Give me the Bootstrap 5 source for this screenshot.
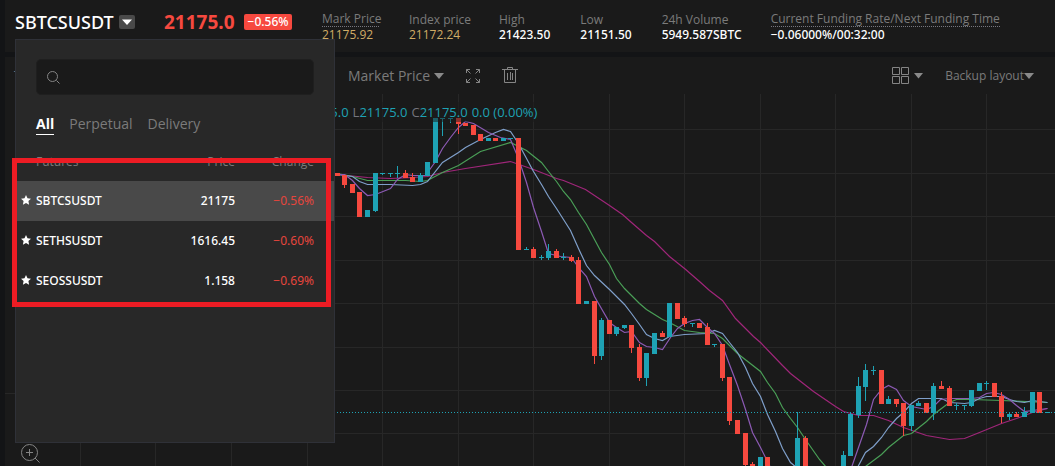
<!DOCTYPE html>
<html lang="en" data-bs-theme="dark">
<head>
<meta charset="utf-8">
<meta name="viewport" content="width=device-width, initial-scale=1">
<title>SBTCSUSDT Futures</title>
<link href="https://cdn.jsdelivr.net/npm/bootstrap@5.3.0/dist/css/bootstrap.min.css" rel="stylesheet">
<style>
  :root { --panel: #1a1a1a; --gap: #131416; --muted: #7b7b7b; --up: #1ea2b4; --down: #f6493f; --gold: #d0ac66; }
  body { background: var(--gap); color: #fff; font: 12px/16px "Open Sans", "Noto Sans", sans-serif; overflow: hidden; }
  button { font: inherit; }
  .plain { background: none; border: 0; padding: 0; color: var(--muted); }
  .page { margin-left: 5px; }
  .bar, .tools, .plot { background: var(--panel); }
  .bar { height: 52px; padding-left: 10px; margin-bottom: 5px; }
  .medium { font-family: "Noto Sans", sans-serif; font-weight: 500; }
  .pair { min-width: 149px; padding-top: 10px; gap: 5px; }
  .symbol { font-size: 18px; line-height: 24px; }
  .toggle { width: 16px; height: 14px; margin-top: 5px; background: #494949; border-radius: 2px; }
  .last { font: 700 19px/24px "Noto Sans", sans-serif; color: var(--down); width: 80px; padding-top: 10px; }
  .change { font: 500 12px/16px "Noto Sans", sans-serif; background: var(--down); border-radius: 2px; width: 48px; padding: 0; margin-top: 14px; }
  .stats { gap: 30px; padding: 11px 0 0 30px; }
  .stats > div { min-width: 51px; white-space: nowrap; }
  .stats .w-index { width: 60px; } .stats .w-mark { width: 57px; } .stats .w-vol { width: 79px; }
  .stats dt { font-weight: 400; color: var(--muted); line-height: 17px; }
  .stats dd { margin: 0; line-height: 13px; }
  .stats .hint { border-bottom: 1px dotted #77777f; line-height: 15px; margin-bottom: 1px; }
  .gold { color: var(--gold); }
  .tools { height: 37px; color: var(--muted); font-size: 14px; padding: 0 21px 0 9px; gap: 22px; }
  .small-text { font-size: 12px; }
  .intervals { width: 312px; }
  .plot svg { display: block; }
  .plot #chart { width: 100%; }
  .legend { top: 8px; left: 286px; font-size: 13px; line-height: 20px; color: var(--up); background: rgba(26,26,26,.5); gap: 4px; }
  .legend b { font-weight: 400; color: #74747c; }
  .zoom-in { left: 16px; bottom: 2px; }
  .picker { top: 39px; left: 10px; width: 320px; height: 404px; background: #282828; border: 1px solid #2f3138; z-index: 5; }
  .search { margin: 19px 20px 0; height: 36px; background: var(--panel); border: 1px solid #1f1f1f; border-radius: 5px; padding-left: 10px; }
  .search input { background: none; border: 0; outline: 0; color: #fff; }
  .tabs { margin: 19px 20px 0; gap: 15px; font-size: 14px; line-height: 20px; }
  .tabs a { color: var(--muted); text-decoration: none; border-bottom: 1px solid transparent; }
  .tabs a.active { color: #fff; font-weight: 700; border-color: #fff; }
  .pairs { width: 100%; margin-top: 16px; table-layout: fixed; }
  .pairs th { font-weight: 400; color: var(--muted); height: 30px; padding: 3px 0 0; vertical-align: top; }
  .pairs td { height: 40px; padding: 0; }
  .pairs tr.on { background: #494949; }
  .pairs th:nth-child(n+2), .pairs td:nth-child(n+2) { text-align: right; }
  .pairs th:last-child, .pairs td:last-child { padding-right: 20px; }
  .pairs td:last-child { color: #e6453d; font-weight: 400; }
  .pairs .name { width: 110px; } .pairs .chg { width: 99px; }
  .pairs th:first-child { padding-left: 20px; }
  .pairs td:first-child { padding-left: 5px; }
  .fav { margin: 0 5px 2px 0; }
  .marker { top: 158px; left: 7px; width: 319px; height: 149px; border: 5px solid #ed1c24; z-index: 6; pointer-events: none; }
</style>
</head>
<body>
<div class="page position-relative">
  <header class="bar d-flex align-items-start">
    <div class="d-flex align-items-start pair">
      <h1 class="symbol medium m-0">SBTCSUSDT</h1>
      <button class="plain toggle d-flex align-items-center justify-content-center" aria-label="Choose contract">
        <svg width="10" height="6"><path d="M0 0.500H10L5 6z" fill="#fff"/></svg>
      </button>
    </div>
    <div class="last">21175.0</div>
    <div class="change badge">−0.56%</div>
    <dl class="stats d-flex mb-0">
      <div class="w-mark"><dt class="hint">Mark Price</dt><dd class="gold">21175.92</dd></div>
      <div class="w-index"><dt>Index price</dt><dd class="gold">21172.24</dd></div>
      <div><dt>High</dt><dd class="medium">21423.50</dd></div>
      <div><dt>Low</dt><dd class="medium">21151.50</dd></div>
      <div class="w-vol"><dt>24h Volume</dt><dd class="medium">5949.587SBTC</dd></div>
      <div><dt class="hint">Current Funding Rate/Next Funding Time</dt><dd class="medium">−0.06000%/00:32:00</dd></div>
    </dl>
  </header>

  <nav class="tools d-flex align-items-center" aria-label="Chart tools">
    <button class="plain intervals text-start">Time</button>
    <button class="plain d-flex align-items-center gap-1">Market Price <svg width="10" height="6"><path d="M0 0H10L5 6z" fill="#8a8a8a"/></svg></button>
    <button class="plain d-flex" aria-label="Full screen">
      <svg width="14" height="14" fill="none" stroke="#858585"><path d="M.5 4V.5H4M.5.5L4.500 4.500M10 .5h3.500V4M13.500.5L9.500 4.500M.5 10v3.500H4M.5 13.500L4.500 9.500M13.500 10v3.500H10M13.500 13.500L9.500 9.500"/></svg>
    </button>
    <button class="plain d-flex" aria-label="Delete drawings">
      <svg width="16" height="17" fill="none" stroke="#858585"><path d="M0 2.500H16M5.500 2.500V.5H10.500V2.500M2.500 2.500V15.500H13.500V2.500M5.500 6V13M8.500 5V13M10.500 6V13"/></svg>
    </button>
    <button class="plain d-flex align-items-center gap-1 ms-auto" aria-label="Layout grid">
      <svg width="18" height="18" fill="none" stroke="#858585"><path d="M.5.5h7v7h-7zM9.500.5h7v7h-7zM.5 9.500h7v7h-7zM9.500 9.500h7v7h-7z"/></svg>
      <svg width="9" height="6"><path d="M0 0H9L4.500 5.500z" fill="#8a8a8a"/></svg>
    </button>
    <button class="plain small-text d-flex align-items-center">Backup layout <svg width="10" height="6"><path d="M0 0H10L5 6z" fill="#8a8a8a"/></svg></button>
  </nav>

  <main class="plot position-relative">
    <svg id="chart" viewBox="5 94 1050 372" role="img" aria-label="Candlestick chart with moving averages"></svg>
    <div class="legend position-absolute d-flex text-nowrap">
      <span><b>H</b>21175.0</span><span><b>L</b>21175.0</span><span><b>C</b>21175.0</span><span>0.0 (0.00%)</span>
    </div>
    <button class="plain zoom-in position-absolute" aria-label="Zoom in">
      <svg width="20" height="20" fill="none" stroke="#858585"><circle cx="8.500" cy="8.500" r="8"/><path d="M14 14l4.500 4.500M5 8.500h7M8.500 5v7"/></svg>
    </button>
  </main>

  <section class="picker position-absolute" aria-label="Contracts">
    <div class="search d-flex align-items-center">
      <svg width="13" height="13" fill="none" stroke="#858585"><circle cx="5.500" cy="5.500" r="5"/><path d="M9.500 9.500L12.500 12.500"/></svg>
      <input class="flex-fill" type="text" aria-label="Search contracts">
    </div>
    <nav class="tabs d-flex"><a class="active" href="#all">All</a><a href="#perpetual">Perpetual</a><a href="#delivery">Delivery</a></nav>
    <table class="pairs">
      <thead><tr><th class="name">Futures</th><th>Price</th><th class="chg">Change</th></tr></thead>
      <tbody id="rows" class="medium"></tbody>
    </table>
  </section>
  <div class="marker position-absolute"></div>
</div>
<script src="https://cdn.jsdelivr.net/npm/bootstrap@5.3.0/dist/js/bootstrap.bundle.min.js"></script>
<script>
const star = '<svg class="fav" width="10" height="10" viewBox="0 0 20 20"><path fill="#fff" d="M10 0l3 6.500 7 .8-5.200 4.900L16.200 19.500 10 15.800 3.800 19.500 5.200 12.200 0 7.300l7-.8z"/></svg>';
document.getElementById('rows').innerHTML = [['SBTCSUSDT','21175','−0.56%'],['SETHSUSDT','1616.45','−0.60%'],['SEOSSUSDT','1.158','−0.69%']]
  .map((r, i) => `<tr class="${i ? '' : 'on'}"><td><span class="d-flex align-items-center">${star}${r[0]}</span></td><td>${r[1]}</td><td>${r[2]}</td></tr>`).join('');

// direction (1 up, 0 down), centre x, body top, body bottom, wick top, wick bottom
const candles = [
[0,337,173,176],[0,344,175,185,175,188],[0,352,184,193],[0,359,192,217],[1,367,210,217],[1,375,173,211,173,212],
[1,382,173,174,173,175],[1,390,173,174,173,177],[1,397,173,174,166,178],[0,405,173,178,170,178],[0,412,177,182,173,182],[1,420,175,182,173,182],
[1,427,162,176],[1,435,118,163],[1,442,118,119,118,136],[1,450,118,119,118,123],[0,458,118,124,118,134],[0,465,123,126],[0,473,125,135],
[0,480,134,141],[1,488,138,141],[0,495,138,141],[1,503,138,141],[1,510,138,139],[0,518,138,250],[1,526,249,250,247,250],[0,533,249,258,247,258],
[1,541,257,258,255,260],[1,548,251,258,244,260],[0,556,251,258,249,258],[1,563,257,258,253,260],[0,571,257,261,255,262],[0,578,260,304,257,304],
[1,586,301,304],[0,594,301,356,301,364],[1,601,320,356,318,360],[0,609,320,334],[1,616,327,334,327,336],[1,624,325,328,325,329],[0,631,325,348,325,353],
[0,639,347,378,344,381],[1,646,353,378,353,386],[1,654,333,354],[0,662,333,337,331,337],[1,669,303,337],[0,677,303,319],[0,684,318,324,316,327],
[1,692,323,324,323,327],[0,699,323,328],[0,707,327,345,323,345],[1,714,344,345,344,347],[0,722,344,378,344,381],[0,729,377,421,377,425],[0,737,420,434],
[0,745,433,465,433,466],[0,752,464,466,462,466],[1,760,457,466],[0,767,457,466],[1,797,438,466,412,466],[0,805,438,466,436,466],[1,843,455,466,451,466],
[1,850,414,456,412,456],[1,858,386,415,377,418],[1,865,370,387,364,401],[1,873,370,371,366,375],[0,881,370,404],[1,888,399,404,396,404],[0,896,399,404,399,407],
[0,903,403,426,403,436],[1,911,405,426,405,431],[1,918,403,406,401,406],[0,926,403,413],[1,933,386,413,383,420],[0,941,386,389,381,389],[0,949,388,406,386,406],
[1,956,405,406,403,410],[1,964,405,406,405,410],[1,971,390,406,390,407],[1,979,383,391],[1,986,383,384,381,390],[0,994,383,397],[0,1001,396,417,392,423],
[1,1009,414,417,412,420],[0,1016,414,417,412,417],[1,1024,412,417,407,417],[1,1032,392,413],[0,1039,392,413],[1,1047,412,413]];
const averages = {
'#a0267a':['337,174 367,177 390,178 412,177 427,176 442,172 465,168 510,161 533,169 556,178 563,180 585,189 609,205 622,214 631,222 646,235 654,241 669,256 684,268 699,281 709,290 722,300 735,318 745,328 753,336 760,342 782,365 790,373 813,391 835,406 843,411 858,415 873,415 888,420 903,427 926,435 949,439 964,438 979,432 1001,423 1016,418 1024,415 1032,412 1047,408'],
'#4a9f57':['337,173 352,176 367,180 405,180 420,181 427,180 442,172 458,165 480,151 510,142 526,150 541,162 548,171 556,181 563,191 570,199 578,212 586,224 594,239 601,252 609,264 616,278 624,288 639,303 646,309 662,319 669,322 684,330 699,332 714,333 722,338 737,353 760,371 767,382 775,393 782,407 790,418 797,427 805,439 812,449 819,459 826,467','865,466 881,454 888,447 903,435 911,433 926,421 933,414 949,402 956,399 971,399 1001,400 1047,402'],
'#7f9fca':['337,174 352,176 359,181 367,184 390,184 412,185 420,184 427,181 442,162 458,152 465,147 480,139 495,132 503,129 510,131 518,143 533,171 541,184 548,196 556,208 563,219 570,230 578,248 586,265 594,275 609,289 624,304 631,313 639,324 646,334 654,338 662,340 669,336 684,334 707,333 714,330 722,333 729,342 737,352 745,367 752,383 760,396 767,414 775,431 782,448 790,462 796,467','857,467 865,452 873,446 881,437 888,427 896,418 903,412 911,403 918,398 941,398 949,402 964,403 971,402 979,398 986,396 1001,396 1009,399 1016,401 1024,402 1032,400 1047,402'],
'#8c5ab4':['337,174 344,174 352,180 359,188 367,195 375,194 390,188 397,179 405,174 412,175 425,175 435,161 442,148 450,137 458,127 465,121 473,123 488,132 500,137 510,139 518,158 526,182 533,207 541,231 548,253 560,256 571,257 578,267 586,276 594,296 609,322 616,327 624,332 631,331 639,342 646,346 654,347 662,349 670,337 677,328 684,323 692,320 699,319 707,327 714,333 722,345 729,364 737,385 745,409 752,432 760,447 767,461 770,467','851,467 858,447 866,424 873,399 881,389 888,385 896,389 903,400 911,406 926,409 933,406 940,399 949,398 971,398 979,397 986,393 993,392 1001,394 1009,399 1016,405 1024,411 1032,410 1047,408']};
let s = '<g stroke="#272727" shape-rendering="crispEdges">';
[80,155,231,307,382,458,533,609,684,760,835,911,986].forEach(x => s += `<path d="M${x + .5} 94V466"/>`);
[129,173,216,260,303,347,390,433].forEach(y => s += `<path d="M330 ${y + .5}H1055"/>`);
s += '<path d="M5 393.500H20"/></g>';
for (const [c, parts] of Object.entries(averages))
  for (const p of parts) s += `<polyline points="${p}" transform="translate(.5 .5)" fill="none" stroke="${c}" stroke-width="1.200"/>`;
s += '<g shape-rendering="crispEdges">';
for (const [up, x, t, b, wt = t, wb = b] of candles)
  s += `<path fill="${up ? '#1ea2b4' : '#f6493f'}" d="M${x - 2} ${t}h5V${b}h-5zM${x} ${wt}h1V${wb}h-1z"/>`;
s += '<path d="M337 412.500H1055" stroke="#1ea2b4" stroke-dasharray="1 2"/></g>';
document.getElementById('chart').innerHTML = s;
</script>
</body>
</html>
